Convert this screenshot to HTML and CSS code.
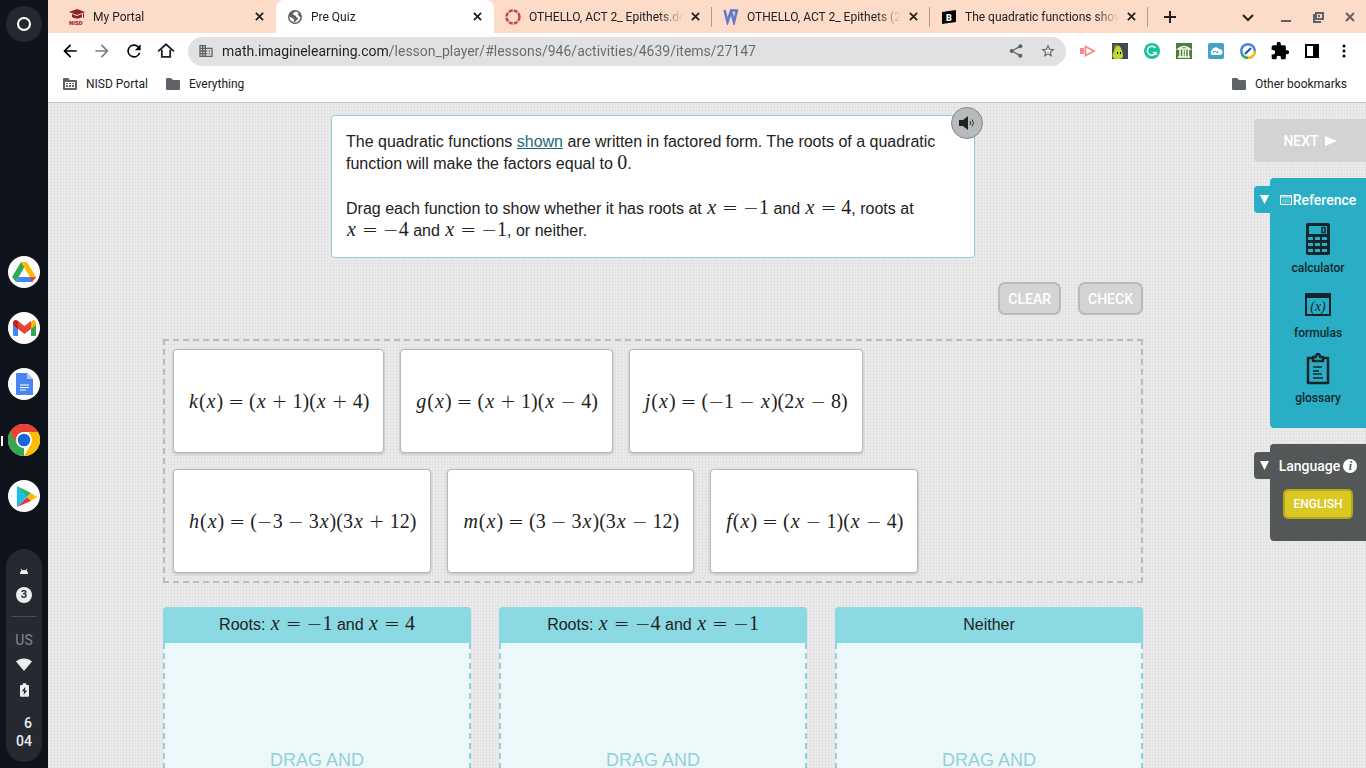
FILE: index.html
```html
<!DOCTYPE html>
<html lang="en">
<head>
    <meta charset="UTF-8">
    <meta name="viewport" content="width=device-width, initial-scale=1.0">
    <title>Pre Quiz</title>
    <link rel="stylesheet" href="styles.css">
</head>
<body>
    <aside class="shelf">
        <button class="launcher" aria-label="Launcher"><span class="launcher-ring"></span></button>
        <nav class="apps">
            <button class="app" aria-label="Drive">
                <svg viewBox="0 0 32 32"><path fill="#34a853" d="M13 6 4 21l4 5 8-14z"/><path fill="#188038" d="M13 6h6l-3 6z"/><path fill="#fbbc04" d="M19 6h-6l9 15h6z"/><path fill="#4285f4" d="M11 21h17l-4 5H8z"/><path fill="#ea4335" d="M22 21h6l-4 5z"/><path fill="#fff" d="m16 12 5 9H11z"/></svg>
            </button>
            <button class="app" aria-label="Gmail">
                <svg viewBox="0 0 32 32"><path fill="#4285f4" d="M5 12v11q0 1 1 1h4V13z"/><path fill="#34a853" d="M28 12v11q0 1-1 1h-4V13z"/><path fill="#fbbc04" d="M23 10v7l5-4v-2c0-3-3-4-5-1z"/><path fill="#c5221f" d="M5 11c0-3 3-4 5-2v8l-5-4z"/><path fill="#ea4335" d="m10 9 6.500 5L23 9v8l-6.500 5L10 17z"/></svg>
            </button>
            <button class="app" aria-label="Docs">
                <svg viewBox="0 0 32 32"><path fill="#4a86f0" d="M9 5h10l6 6v15q0 1-1 1H9q-1 0-1-1V6q0-1 1-1z"/><path fill="#a6c5fa" d="M19 5v6h6z"/><path stroke="#fff" stroke-width="1.200" d="M12 17h9M12 19.500h9M12 22h6"/></svg>
            </button>
            <button class="app app-active" aria-label="Chrome">
                <svg viewBox="0 0 32 32"><path fill="#ea4335" d="M16 16H2A16 16 0 0 1 29.900 8H16z"/><path fill="#ea4335" d="M2.100 8A16 16 0 0 1 29.900 8H16L9 20z"/><path fill="#34a853" d="M2.100 8 9 20l7 4 0 8A16 16 0 0 1 2.100 8z"/><path fill="#fbbc04" d="M16 32l7-12-2-12h8.900A16 16 0 0 1 16 32z"/><circle cx="16" cy="16" r="8" fill="#fff"/><circle cx="16" cy="16" r="6.300" fill="#1a67d8"/></svg>
            </button>
            <button class="app" aria-label="Play Store">
                <svg viewBox="0 0 32 32"><path fill="#12c2e8" d="M9 6v21l10-10.500z"/><path fill="#2fb56a" d="M9 6l14 7-4 4z"/><path fill="#fbbc04" d="m23 13 6 4-6 4-4-4z"/><path fill="#d83b4a" d="m9 27 10-10 4 4z"/></svg>
            </button>
        </nav>
        <div class="status">
            <svg class="status-android" viewBox="0 0 10 8"><path fill="#eceef0" d="M1 6a4 4 0 0 1 8 0z"/><path stroke="#eceef0" d="m2 1 1.500 2M8 1 6.500 3"/></svg>
            <span class="status-count">3</span>
            <span class="status-line"></span>
            <span class="status-lang">US</span>
            <svg class="status-wifi" viewBox="0 0 16 13"><path fill="#eceef0" d="M0 3.500C4.500-.5 11.500-.5 16 3.500L8 13z"/></svg>
            <svg class="status-battery" viewBox="0 0 10 15"><path fill="#eceef0" d="M3 0h4v2h2q1 0 1 1v11q0 1-1 1H1q-1 0-1-1V3q0-1 1-1h2z"/><path fill="#26292f" d="M6 4 2 9h2.500L4 13l4-5H5.500z"/></svg>
            <span class="status-time">6<br>04</span>
        </div>
    </aside>

    <div class="browser">
        <header class="tabstrip">
            <div class="tab">
                <svg class="favicon" viewBox="0 0 16 16"><path fill="#8d1f2f" d="m0 3 8-3 8 3-8 3zM3 5l5 2 5-2v3q-5 3-10 0zM14 4h1v5h-1z"/><text x="0" y="16" class="favicon-nisd">NISD</text></svg>
                <span class="tab-title">My Portal</span>
                <button class="tab-close" aria-label="Close tab"><svg viewBox="0 0 10 10"><path d="m1 1 8 8M9 1 1 9"/></svg></button>
            </div>
            <div class="tab tab-current">
                <svg class="favicon" viewBox="0 0 16 16"><circle cx="8" cy="8" r="7" fill="#5f6368"/><path fill="#fff" d="M9 2.500c-1 1-3 1-3 2.500s3 1 3 2.500 2 .5 2 1.500-1 2-2 3c-2 2-3 1-2-1 0-2-3-2-4.500-3.500l0 1A5.500 5.500 0 0 0 8 13.500c2 0 5-2 5.500-5L11 6q-1-1 1-2z"/></svg>
                <span class="tab-title">Pre Quiz</span>
                <button class="tab-close" aria-label="Close tab"><svg viewBox="0 0 10 10"><path d="m1 1 8 8M9 1 1 9"/></svg></button>
            </div>
            <div class="tab tab-divided">
                <svg class="favicon" viewBox="0 0 16 16"><circle cx="8" cy="8" r="6.500" fill="none" stroke="#c8473d" stroke-width="2.500" stroke-dasharray="4 1.100"/></svg>
                <span class="tab-title">OTHELLO, ACT 2_ Epithets.docx</span>
                <button class="tab-close" aria-label="Close tab"><svg viewBox="0 0 10 10"><path d="m1 1 8 8M9 1 1 9"/></svg></button>
            </div>
            <div class="tab tab-divided">
                <svg class="favicon" viewBox="0 0 16 16"><path fill="none" stroke="#6479c9" stroke-width="2.600" d="m1.500 1 3 12L8 2l3 11L14 1M9 1.500h6"/></svg>
                <span class="tab-title">OTHELLO, ACT 2_ Epithets (2).docx</span>
                <button class="tab-close" aria-label="Close tab"><svg viewBox="0 0 10 10"><path d="m1 1 8 8M9 1 1 9"/></svg></button>
            </div>
            <div class="tab tab-divided">
                <svg class="favicon" viewBox="0 0 16 16"><path d="m1 3 14-2v12L1 15z"/><text x="5" y="12" class="favicon-b">B</text></svg>
                <span class="tab-title">The quadratic functions shown are</span>
                <button class="tab-close" aria-label="Close tab"><svg viewBox="0 0 10 10"><path d="m1 1 8 8M9 1 1 9"/></svg></button>
            </div>
            <button class="new-tab" aria-label="New tab"><svg viewBox="0 0 12 12"><path d="M6 0v12M0 6h12"/></svg></button>
            <div class="window-controls">
                <button class="tab-search" aria-label="Search tabs"><svg viewBox="0 0 12 12"><path d="m1 4 5 5 5-5"/></svg></button>
                <button aria-label="Minimize"><svg viewBox="0 0 12 12"><path d="M1 10h10"/></svg></button>
                <button aria-label="Restore"><svg viewBox="0 0 12 12"><path d="M4 2h7v6H4zM2 3v8h7M6 5h2"/></svg></button>
                <button aria-label="Close"><svg viewBox="0 0 12 12"><path d="m2 2 8 8M10 2l-8 8"/></svg></button>
            </div>
        </header>

        <div class="toolbar">
            <button aria-label="Back"><svg viewBox="0 0 24 24"><path d="M20 11H7.830l5.590-5.590L12 4l-8 8 8 8 1.410-1.410L7.830 13H20z"/></svg></button>
            <button class="forward" aria-label="Forward"><svg viewBox="0 0 24 24"><path d="m12 4-1.410 1.410L16.170 11H4v2h12.170l-5.580 5.590L12 20l8-8z"/></svg></button>
            <button aria-label="Reload"><svg viewBox="0 0 24 24"><path d="M17.650 6.350A8 8 0 1 0 19.730 14h-2.080A6 6 0 1 1 12 6c1.660 0 3.140.69 4.220 1.780L13 11h7V4z"/></svg></button>
            <button aria-label="Home"><svg viewBox="0 0 24 24"><path d="M7 10.500V19h10v-8.500M2.500 12.500 12 4l9.500 8.500" fill="none" stroke="#202124" stroke-width="2.200"/></svg></button>
            <div class="omnibox">
                <svg class="site-icon" viewBox="0 0 24 24"><path d="M12 7V3H2v18h20V7H12zM6 19H4v-2h2v2zm0-4H4v-2h2v2zm0-4H4V9h2v2zm0-4H4V5h2v2zm4 12H8v-2h2v2zm0-4H8v-2h2v2zm0-4H8V9h2v2zm0-4H8V5h2v2zm10 12h-8v-2h2v-2h-2v-2h2v-2h-2V9h8v10zm-2-8h-2v2h2v-2zm0 4h-2v2h2v-2z"/></svg>
                <input class="url" type="text" aria-label="Address" value="math.imaginelearning.com/lesson_player/#lessons/946/activities/4639/items/27147">
                <button aria-label="Share"><svg viewBox="0 0 24 24"><path d="M6 12 18 5M6 12l12 7" fill="none" stroke="#5f6368" stroke-width="2"/><circle cx="5.500" cy="12" r="3"/><circle cx="18.500" cy="5" r="3"/><circle cx="18.500" cy="19" r="3"/></svg></button>
                <button aria-label="Bookmark"><svg viewBox="0 0 24 24"><path d="m22 9.240-7.190-.62L12 2 9.190 8.630 2 9.240l5.460 4.730L5.820 21 12 17.270 18.180 21l-1.630-7.030zM12 15.400l-3.760 2.270 1-4.280-3.320-2.880 4.380-.38L12 6.100l1.710 4.040 4.380.38-3.320 2.880 1 4.280z"/></svg></button>
            </div>
            <button aria-label="Screencastify"><svg viewBox="0 0 16 16"><path fill="#f58a8a" d="M0 5h4v6H0z"/><path fill="none" stroke="#f58a8a" stroke-width="1.800" d="M5.500 3.500v9L14 8z"/></svg></button>
            <button aria-label="Pear Deck"><svg viewBox="0 0 16 16"><path fill="#3d4b57" d="M0 0h16v16H0z"/><path fill="#7a6a45" d="m1 2 4-1 2 4-5 3z"/><path fill="#c3d82e" d="M5 3c3-1 4 2 5 5s3 8-4 8-6-4-4-8 1-4 3-5z"/><path d="M5 9h1v2H5zM8 9h1v2H8z"/></svg></button>
            <button aria-label="Grammarly"><svg viewBox="0 0 16 16"><circle cx="8" cy="8" r="8" fill="#15c39a"/><path fill="none" stroke="#fff" stroke-width="1.500" d="M11.500 5A4.500 4.500 0 1 0 12 9.500H9M12 9v3"/></svg></button>
            <button aria-label="Library"><svg viewBox="0 0 16 16"><path fill="#4c7f36" d="M0 0h16v16H0z"/><path fill="none" stroke="#fff" stroke-width="1.500" d="M2 6q6-5 12 0zM4 7v7M7 7v7M9.500 7v7M12.500 7v7M2 14h12"/></svg></button>
            <button aria-label="Cloud"><svg viewBox="0 0 16 16"><rect width="16" height="16" rx="2" fill="#3ea6c4"/><path fill="#fff" d="M4 12a3 3 0 0 1 0-5 4 4 0 0 1 7-1 3 3 0 0 1 1 6z"/><path stroke="#3ea6c4" fill="none" d="M6 10q-2-2 1-2l2 2q2-1 0-2"/></svg></button>
            <button aria-label="Dashboard"><svg viewBox="0 0 16 16"><circle cx="8" cy="8" r="8" fill="#4285f4"/><path fill="#fbbc04" d="M8 8h8a8 8 0 0 1-8 8z"/><path fill="#34a853" d="M8 16a8 8 0 0 1-7-4l7-4z"/><circle cx="8" cy="8" r="5.500" fill="#fff"/><path stroke="#174ea6" stroke-width="2" d="m5 11 6-6"/></svg></button>
            <button aria-label="Extensions"><svg viewBox="0 0 24 24"><path d="M20.500 11H19V7a2 2 0 0 0-2-2h-4V3.500a2.500 2.500 0 0 0-5 0V5H4a2 2 0 0 0-2 2v3.800h1.500a2.700 2.700 0 0 1 0 5.400H2V20a2 2 0 0 0 2 2h3.800v-1.500a2.700 2.700 0 0 1 5.400 0V22H17a2 2 0 0 0 2-2v-4h1.500a2.500 2.500 0 0 0 0-5z"/></svg></button>
            <button aria-label="Side panel"><svg viewBox="0 0 16 16"><path d="M1 1h14v14H1zm2 2v10h6V3z" fill-rule="evenodd"/></svg></button>
            <button aria-label="Menu"><svg viewBox="0 0 16 16"><circle cx="8" cy="3" r="1.500"/><circle cx="8" cy="8" r="1.500"/><circle cx="8" cy="13" r="1.500"/></svg></button>
        </div>

        <nav class="bookmarks">
            <a href="#"><svg viewBox="0 0 14 12"><path d="M0 1q0-1 1-1h4l2 2h6q1 0 1 1v8q0 1-1 1H1q-1 0-1-1z"/><path fill="#fff" d="M2 4h10v6H2z"/><path d="M3 5h2v1H3zM6 5h2v1H6zM9 5h2v1H9zM3 7h2v2H3zM6 7h2v2H6zM9 7h2v2H9z"/></svg>NISD Portal</a>
            <a href="#"><svg viewBox="0 0 14 12"><path d="M0 1q0-1 1-1h4l2 2h6q1 0 1 1v8q0 1-1 1H1q-1 0-1-1z"/></svg>Everything</a>
            <a href="#" class="bookmarks-other"><svg viewBox="0 0 14 12"><path d="M0 1q0-1 1-1h4l2 2h6q1 0 1 1v8q0 1-1 1H1q-1 0-1-1z"/></svg>Other bookmarks</a>
        </nav>

        <div class="page">
            <main class="activity">
                <section class="question">
                    <button class="speak" aria-label="Read aloud">
                        <svg viewBox="0 0 16 14"><path d="M0 4h4l5-4v14l-5-4H0z"/><path fill="none" stroke="#333" d="M11 5q1.500 2 0 4M13 3.500q3 3.500 0 7"/></svg>
                    </button>
                    <p>The quadratic functions <a href="#">shown</a> are written in factored form. The roots of a quadratic function will make the factors equal to <span class="math">0</span>.</p>
                    <p>Drag each function to show whether it has roots at <span class="math"><i>x</i><b class="op">=</b><b>−</b>1</span> and <span class="math"><i>x</i><b class="op">=</b>4</span>, roots at <span class="math"><i>x</i><b class="op">=</b><b>−</b>4</span> and <span class="math"><i>x</i><b class="op">=</b><b>−</b>1</span>, or neither.</p>
                </section>

                <div class="actions">
                    <button class="action">CLEAR</button>
                    <button class="action">CHECK</button>
                </div>

                <section class="tiles">
                    <div class="tile math" draggable="true"><i>k</i>(<i>x</i>)<b class="op">=</b>(<i>x</i><b class="op">+</b>1)(<i>x</i><b class="op">+</b>4)</div>
                    <div class="tile math" draggable="true"><i>g</i>(<i>x</i>)<b class="op">=</b>(<i>x</i><b class="op">+</b>1)(<i>x</i><b class="op">−</b>4)</div>
                    <div class="tile math" draggable="true"><i>j</i>(<i>x</i>)<b class="op">=</b>(<b>−</b>1<b class="op">−</b><i>x</i>)(2<i>x</i><b class="op">−</b>8)</div>
                    <div class="tile math" draggable="true"><i>h</i>(<i>x</i>)<b class="op">=</b>(<b>−</b>3<b class="op">−</b>3<i>x</i>)(3<i>x</i><b class="op">+</b>12)</div>
                    <div class="tile math" draggable="true"><i>m</i>(<i>x</i>)<b class="op">=</b>(3<b class="op">−</b>3<i>x</i>)(3<i>x</i><b class="op">−</b>12)</div>
                    <div class="tile math" draggable="true"><i>f</i>(<i>x</i>)<b class="op">=</b>(<i>x</i><b class="op">−</b>1)(<i>x</i><b class="op">−</b>4)</div>
                </section>

                <section class="bins">
                    <div class="bin">
                        <div class="bin-title">Roots: <span class="math"><i>x</i><b class="op">=</b><b>−</b>1</span> and <span class="math"><i>x</i><b class="op">=</b>4</span></div>
                        <div class="bin-body">DRAG AND</div>
                    </div>
                    <div class="bin">
                        <div class="bin-title">Roots: <span class="math"><i>x</i><b class="op">=</b><b>−</b>4</span> and <span class="math"><i>x</i><b class="op">=</b><b>−</b>1</span></div>
                        <div class="bin-body">DRAG AND</div>
                    </div>
                    <div class="bin">
                        <div class="bin-title">Neither</div>
                        <div class="bin-body">DRAG AND</div>
                    </div>
                </section>
            </main>

            <aside class="tools">
                <button class="next">NEXT <svg viewBox="0 0 12 10"><path d="M0 0v10l12-5z"/></svg></button>

                <section class="panel">
                    <button class="flap" aria-label="Collapse reference"><svg viewBox="0 0 10 10"><path d="M0 0h10L5 10z"/></svg></button>
                    <div class="panel-box">
                        <h2><svg class="ref-icon" viewBox="0 0 12 10"><path fill="none" stroke="#fff" d="M.5.5h11v9H.5z"/><path stroke="#fff" d="M1 2h10"/><path stroke="#fff" stroke-opacity=".5" d="M3 4v4M5 4v4M7 4v4M9 4v4"/></svg>Reference</h2>
                        <button class="tool">
                            <svg viewBox="0 0 32 32"><path fill-rule="evenodd" d="M6 0h20q2 0 2 2v28q0 2-2 2H6q-2 0-2-2V2q0-2 2-2zm1 3v8h18V3zM6 14v3h5v-3zm7 0v3h5v-3zm7 0v3h5v-3zM6 20v3h5v-3zm7 0v3h5v-3zm7 0v3h5v-3zM6 26v3h5v-3zm7 0v3h5v-3zm7 0v3h5v-3z"/><path fill="none" stroke="#12262c" stroke-width="1.500" d="M20 4.500h3v5h-3z"/></svg>
                            calculator
                        </button>
                        <button class="tool">
                            <svg viewBox="0 0 32 32"><path fill-rule="evenodd" d="M3 5h26v23H3zm2 5v16h22V10z"/><text x="16" y="23" class="formula-glyph">(x)</text></svg>
                            formulas
                        </button>
                        <button class="tool">
                            <svg viewBox="0 0 32 32"><path fill="none" stroke="#12262c" stroke-width="2.500" stroke-linejoin="round" d="M11 5H6v25h20V5h-5M11 8V4h3q0-3 2-3t2 3h3v4z"/><path stroke="#12262c" stroke-width="1.500" d="M11 14h9M11 18h6M11 21h9M11 25h10"/></svg>
                            glossary
                        </button>
                    </div>
                </section>

                <section class="panel panel-dark">
                    <button class="flap" aria-label="Collapse language"><svg viewBox="0 0 10 10"><path d="M0 0h10L5 10z"/></svg></button>
                    <div class="panel-box">
                        <h2>Language<span class="info">i</span></h2>
                        <button class="language">ENGLISH</button>
                    </div>
                </section>
            </aside>
        </div>
    </div>
</body>
</html>
```
FILE: styles.css
```css
* {
    box-sizing: border-box;
}
body {
    display: flex;
    height: 100vh;
    margin: 0;
    overflow: hidden;
    font-family: Roboto, sans-serif;
    font-size: 12px;
    color: #202124;
}
button {
    padding: 0;
    border: none;
    background: none;
    font-family: inherit;
    color: inherit;
    cursor: pointer;
}
svg {
    display: block;
    flex: none;
}

/* Shelf */
.shelf {
    display: grid;
    grid-template-rows: 1fr auto 1fr;
    justify-items: center;
    flex: 0 0 48px;
    padding: 6px 0;
    background: #0e121b;
}
.launcher {
    display: flex;
    align-items: center;
    justify-content: center;
    width: 36px;
    height: 36px;
    border-radius: 50%;
    background: #25282f;
}
.launcher-ring {
    width: 14px;
    height: 14px;
    border: 2px solid #fff;
    border-radius: 50%;
}
.apps {
    display: flex;
    flex-direction: column;
    gap: 24px;
}
.app {
    position: relative;
    width: 32px;
    height: 32px;
    border-radius: 50%;
    background: #fff;
}
.app-active::before {
    content: "";
    position: absolute;
    left: -7px;
    top: 12px;
    width: 2px;
    height: 10px;
    background: #fff;
}
.status {
    display: flex;
    flex-direction: column;
    align-items: center;
    align-self: end;
    width: 36px;
    padding: 19px 0 12px;
    border-radius: 18px;
    background: #26292f;
    color: #eceef0;
}
.status-android {
    width: 10px;
    height: 8px;
}
.status-count {
    width: 16px;
    margin: 11px 0 13px;
    border-radius: 50%;
    background: #eceef0;
    color: #26292f;
    font-size: 11px;
    font-weight: 700;
    line-height: 16px;
    text-align: center;
}
.status-line {
    width: 24px;
    height: 1px;
    background: #4a4d52;
}
.status-lang {
    margin: 15px 0 10px;
    font-size: 14px;
    line-height: 16px;
    color: #85888c;
}
.status-wifi {
    width: 16px;
    height: 13px;
}
.status-battery {
    width: 9px;
    height: 14px;
    margin: 12px 0 17px;
}
.status-time {
    align-self: flex-end;
    padding-right: 10px;
    font-size: 14px;
    font-weight: 500;
    line-height: 18px;
    text-align: right;
}

/* Browser frame */
.browser {
    display: flex;
    flex-direction: column;
    flex: 1;
    min-width: 0;
    background: #fff;
}
.tabstrip {
    display: flex;
    height: 33px;
    padding-left: 10px;
    background: #fddbc9;
}
.tab {
    display: flex;
    align-items: center;
    flex: 0 1 218px;
    min-width: 0;
    padding: 0 9px 0 11px;
}
.tab-current {
    border-radius: 8px 8px 0 0;
    background: #fff;
}
.tab-divided {
    background: linear-gradient(#b59b8f, #b59b8f) right center / 1px 20px no-repeat;
}
.favicon {
    width: 16px;
    height: 16px;
    margin-right: 8px;
}
.favicon-nisd {
    font-size: 6px;
    font-weight: 900;
    fill: #a51f30;
}
.favicon-b {
    font-size: 9px;
    font-weight: 900;
    fill: #fff;
}
.tab-title {
    flex: 1;
    overflow: hidden;
    white-space: nowrap;
    line-height: 16px;
    -webkit-mask-image: linear-gradient(to left, transparent, #000 24px);
    mask-image: linear-gradient(to left, transparent, #000 24px);
}
.tab-close {
    padding: 3px;
    margin-left: 5px;
}
.tab-close svg {
    width: 9px;
    height: 9px;
}
.tabstrip button path {
    fill: none;
    stroke: #202124;
    stroke-width: 2;
}
.new-tab {
    width: 44px;
}
.new-tab svg {
    width: 12px;
    height: 12px;
    margin: auto;
}
.window-controls {
    display: flex;
    margin-left: auto;
}
.window-controls button {
    width: 32px;
}
.window-controls .tab-search {
    width: 39px;
    margin-right: 3px;
}
.window-controls svg {
    width: 12px;
    height: 12px;
    margin: auto;
}
.window-controls button:not(.tab-search) path {
    stroke: #5f6368;
}
.toolbar {
    display: flex;
    align-items: center;
    height: 36px;
    padding: 0 6px;
}
.toolbar > button {
    flex: 0 0 32px;
}
.toolbar > button svg {
    width: 16px;
    height: 16px;
    margin: auto;
}
.toolbar > button svg[viewBox="0 0 24 24"] {
    width: 20px;
    height: 20px;
}
.toolbar .forward {
    opacity: 0.5;
}
.omnibox {
    display: flex;
    align-items: center;
    flex: 1;
    height: 29px;
    margin: 0 6px;
    padding: 0 2px 0 10px;
    border-radius: 15px;
    background: #e1e1e1;
    fill: #5f6368;
}
.site-icon,
.omnibox button svg {
    width: 16px;
    height: 16px;
    margin: auto;
}
.omnibox button {
    width: 32px;
}
.url {
    flex: 1;
    min-width: 0;
    padding: 0;
    margin-left: 8px;
    border: none;
    outline: none;
    font-family: inherit;
    font-size: 14px;
    /* host name darker than the path */
    color: transparent;
    background: linear-gradient(to right, #202124 168px, #66696d 168px);
    -webkit-background-clip: text;
    background-clip: text;
}
.bookmarks {
    display: flex;
    align-items: center;
    gap: 18px;
    height: 34px;
    padding: 0 19px 4px 15px;
    border-bottom: 1px solid #c4c4c4;
}
.bookmarks a {
    display: flex;
    align-items: center;
    color: #202124;
    text-decoration: none;
}
.bookmarks svg {
    width: 14px;
    height: 12px;
    margin-right: 9px;
    fill: #5f6368;
}
.bookmarks .bookmarks-other {
    margin-left: auto;
}

/* Lesson page */
.page {
    display: flex;
    flex: 1;
    min-height: 0;
    padding-left: 4px;
    overflow: hidden;
    background-color: #ebebeb;
    background-image:
        repeating-linear-gradient(0deg, rgba(0, 0, 0, 0.025) 0 1px, transparent 1px 3px),
        repeating-linear-gradient(90deg, rgba(0, 0, 0, 0.03) 0 1px, transparent 1px 3px);
}
.activity {
    flex: 1;
    max-width: 980px;
    margin: 0 auto;
    padding-top: 12px;
    font-family: "Liberation Sans", Arial, sans-serif;
    font-size: 16px;
    line-height: 22px;
    color: #222;
}
.question {
    position: relative;
    max-width: 644px;
    margin: 0 auto;
    padding: 15px 14px;
    border: 1px solid #8ccfda;
    border-radius: 4px;
    background: #fff;
}
.question p {
    margin: 0;
}
.question p + p {
    margin-top: 23px;
}
.question a {
    color: #1d6a7c;
}
.speak {
    position: absolute;
    top: -9px;
    right: -9px;
    width: 32px;
    height: 32px;
    border: 1px solid #858888;
    border-radius: 50%;
    background: #b8bbbb;
}
.speak svg {
    width: 16px;
    height: 14px;
    margin: auto;
    fill: #222;
}
/* zero line height keeps the larger math from stretching its line */
.math {
    font-family: "Liberation Serif", "Times New Roman", serif;
    font-size: 20px;
    line-height: 0;
    white-space: nowrap;
}
.math i {
    padding: 0 1px;
}
.math b {
    font-family: "DejaVu Sans", sans-serif;
    font-size: 19px;
    font-weight: 200;
}
.math .op {
    margin: 0 5px;
}
.actions {
    display: flex;
    justify-content: flex-end;
    gap: 17px;
    margin: 24px 0;
}
.action {
    height: 33px;
    padding: 0 8px;
    border: 2px solid #b9bbba;
    border-radius: 7px;
    background: #d3d5d4;
    color: #fff;
    font-family: Roboto, sans-serif;
    font-size: 14px;
    font-weight: 500;
}
.tiles {
    display: flex;
    flex-wrap: wrap;
    gap: 16px;
    padding: 8px 16px 8px 8px;
    border: 2px dashed #bcbcbc;
}
.tile {
    display: flex;
    align-items: center;
    height: 104px;
    padding: 0 14px;
    border: 1px solid #b8b8b8;
    border-radius: 4px;
    background: #fff;
    box-shadow: 0 1px 3px rgba(0, 0, 0, 0.2);
    line-height: 22px;
    cursor: grab;
}
.bins {
    display: grid;
    grid-template-columns: repeat(3, 1fr);
    gap: 28px;
    margin-top: 24px;
}
.bin-title {
    height: 36px;
    border-radius: 4px 4px 0 0;
    background: #8bd9e2;
    line-height: 36px;
    text-align: center;
}
.bin-body {
    padding: 106px 0;
    border: 2px dashed #91d2d8;
    border-top: none;
    background: #ecf8fa;
    color: #91d2d8;
    font-size: 18px;
    text-align: center;
}

/* Right side tools */
.tools {
    flex: 0 0 112px;
    padding-top: 16px;
}
.next {
    display: flex;
    align-items: center;
    justify-content: center;
    gap: 6px;
    width: 100%;
    height: 43px;
    border-radius: 4px 0 0 4px;
    background: #d2d4d3;
    color: #fff;
    font-size: 14px;
    font-weight: 500;
}
.next svg {
    width: 12px;
    height: 10px;
    fill: #fff;
}
.panel {
    display: flex;
    align-items: flex-start;
    margin-top: 16px;
    color: #fff;
}
.flap {
    flex: 0 0 16px;
    height: 27px;
    margin-top: 8px;
    padding-left: 6px;
    border-radius: 4px 0 0 4px;
    background: #29aec6;
}
.flap svg {
    width: 9px;
    height: 9px;
    fill: #fff;
}
.panel-box {
    display: flex;
    flex-direction: column;
    align-items: center;
    flex: 1;
    padding: 11px 0 22px;
    border-radius: 4px 0 0 4px;
    background: #29aec6;
}
.panel h2 {
    display: flex;
    align-items: center;
    margin: 0 0 12px;
    font-size: 14px;
    font-weight: 500;
    line-height: 22px;
}
.ref-icon {
    width: 12px;
    height: 10px;
    margin-right: 1px;
}
.tool {
    color: #12262c;
    font-size: 12px;
    font-weight: 500;
    line-height: 16px;
}
.tool + .tool {
    margin-top: 12px;
}
.tool svg {
    width: 32px;
    height: 32px;
    margin: 0 auto 5px;
    fill: #12262c;
}
.formula-glyph {
    font-family: "Liberation Serif", serif;
    font-size: 14px;
    font-style: italic;
    text-anchor: middle;
}
.panel-dark .flap,
.panel-dark .panel-box {
    background: #545758;
}
.info {
    width: 14px;
    margin-left: 3px;
    border-radius: 50%;
    background: #fff;
    color: #545758;
    font-family: "Liberation Serif", serif;
    font-size: 12px;
    font-style: italic;
    font-weight: 700;
    line-height: 14px;
    text-align: center;
}
.language {
    height: 30px;
    padding: 0 8px;
    border: 2px solid #b3a51c;
    border-radius: 5px;
    background: #dac823;
    color: #fff;
    font-size: 12px;
    font-weight: 500;
}
```
